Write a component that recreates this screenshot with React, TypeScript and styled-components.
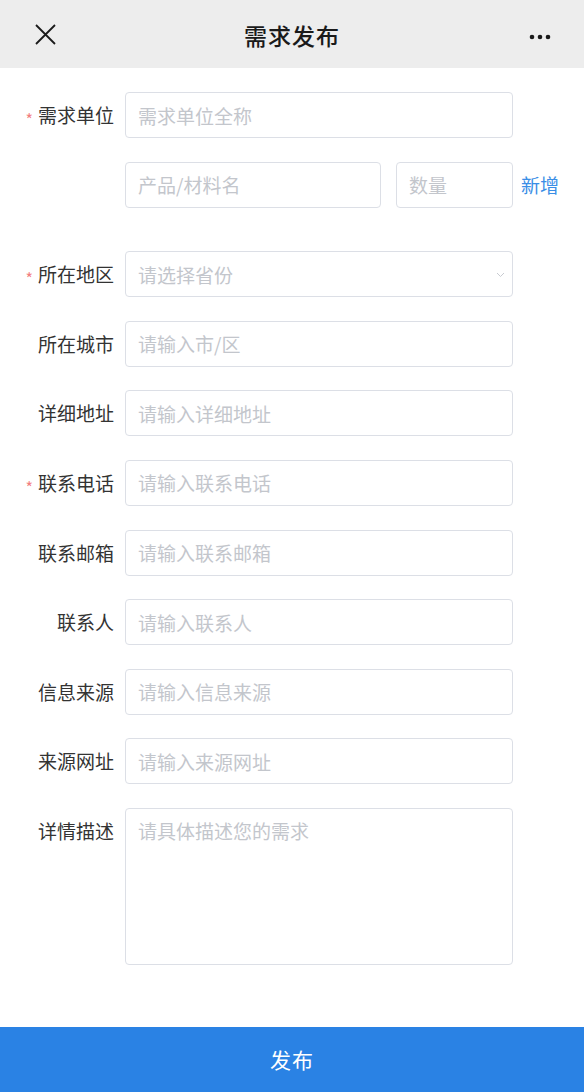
import React from "react";
import styled, { createGlobalStyle } from "styled-components";

const GlobalStyle = createGlobalStyle`
  html, body { margin: 0; padding: 0; background: #ffffff; }
  body { font-family: "Noto Sans CJK SC", "Noto Sans", sans-serif; }
  * { box-sizing: border-box; }
`;

const Page = styled.div`
  width: 584px;
  min-height: 1092px;
  display: flex;
  flex-direction: column;
  background: #fff;
`;

const Header = styled.header`
  position: relative;
  height: 68px;
  background: #ededed;
  display: flex;
  align-items: center;
  justify-content: space-between;
  padding: 0 33px 0 35px;
`;

const Title = styled.h1`
  position: absolute;
  left: 0;
  right: 0;
  top: 0;
  line-height: 70px;
  margin: 0;
  text-align: center;
  font-size: 23px;
  font-weight: 500;
  color: #1a1a1a;
  letter-spacing: 1px;
  pointer-events: none;
`;

const Dots = styled.svg`
  margin-top: 6px;
`;

const Form = styled.form`
  padding-top: 24px;
  display: flex;
  flex-direction: column;
`;

const Row = styled.div<{ $gap?: number; $top?: boolean }>`
  display: flex;
  align-items: ${(p) => (p.$top ? "flex-start" : "center")};
  gap: 11px;
  margin-bottom: ${(p) => (p.$gap ?? 23.6)}px;
`;

const Label = styled.label`
  width: 114px;
  height: 46px;
  flex: 0 0 114px;
  text-align: right;
  font-size: 19px;
  line-height: 46px;
  color: #333;
  white-space: nowrap;
`;

const Star = styled.span`
  display: inline-block;
  color: #f27f7f;
  font-size: 16px;
  line-height: 1;
  margin-right: 5px;
  transform: translateY(3px);
`;

const Input = styled.input<{ $w: number }>`
  width: ${(p) => p.$w}px;
  height: 46px;
  border: 1px solid #dcdfe6;
  border-radius: 4px;
  padding: 0 12px;
  font-size: 19px;
  font-family: inherit;
  color: #333;
  background: #fff;
  outline: none;
  &::placeholder { color: #c3c6cc; }
`;

const SelectBox = styled.div`
  position: relative;
  width: 388px;
  height: 46px;
`;

const Chevron = styled.svg`
  position: absolute;
  right: 8px;
  top: 21px;
`;

const Spacer = styled.div`
  width: 114px;
  flex: 0 0 114px;
`;

const SubGroup = styled.div`
  display: flex;
  align-items: center;
  gap: 15px;
`;

const AddLink = styled.a`
  color: #3a8ee6;
  font-size: 19px;
  margin-left: -7px;
  cursor: pointer;
`;

const TextArea = styled.textarea`
  display: block;
  width: 388px;
  height: 157px;
  border: 1px solid #dcdfe6;
  border-radius: 4px;
  padding: 8px 12px;
  font-size: 19px;
  font-family: inherit;
  resize: none;
  outline: none;
  &::placeholder { color: #c3c6cc; }
`;

const Submit = styled.button`
  margin-top: 62px;
  width: 584px;
  height: 65px;
  border: none;
  background: #2a82e4;
  color: #fff;
  font-size: 21px;
  font-family: inherit;
  letter-spacing: 1px;
`;

type Field = { label: string; ph: string; req?: boolean };

const fields: Field[] = [
  { label: "所在城市", ph: "请输入市/区" },
  { label: "详细地址", ph: "请输入详细地址" },
  { label: "联系电话", ph: "请输入联系电话", req: true },
  { label: "联系邮箱", ph: "请输入联系邮箱" },
  { label: "联系人", ph: "请输入联系人" },
  { label: "信息来源", ph: "请输入信息来源" },
  { label: "来源网址", ph: "请输入来源网址" },
];

export default function App() {
  return (
    <Page>
      <GlobalStyle />
      <Header>
        <svg width="21" height="21" viewBox="0 0 21 21">
          <path d="M1 1 L20 20 M20 1 L1 20" stroke="#1a1a1a" strokeWidth="1.8" fill="none" />
        </svg>
        <Title>需求发布</Title>
        <Dots width="22" height="6" viewBox="0 0 22 6">
          <circle cx="3" cy="3" r="2.3" fill="#1a1a1a" />
          <circle cx="11" cy="3" r="2.3" fill="#1a1a1a" />
          <circle cx="19" cy="3" r="2.3" fill="#1a1a1a" />
        </Dots>
      </Header>
      <Form onSubmit={(e) => e.preventDefault()}>
        <Row>
          <Label><Star>*</Star>需求单位</Label>
          <Input $w={388} placeholder="需求单位全称" />
        </Row>
        <Row $gap={43.6}>
          <Spacer />
          <SubGroup>
            <Input $w={256} placeholder="产品/材料名" />
            <Input $w={117} placeholder="数量" />
            <AddLink>新增</AddLink>
          </SubGroup>
        </Row>
        <Row>
          <Label><Star>*</Star>所在地区</Label>
          <SelectBox>
            <Input $w={388} placeholder="请选择省份" readOnly />
            <Chevron width="9" height="6" viewBox="0 0 9 6">
              <path d="M1 1 L4.5 4.5 L8 1" stroke="#c8cbd1" strokeWidth="1" fill="none" />
            </Chevron>
          </SelectBox>
        </Row>
        {fields.map((f) => (
          <Row key={f.label}>
            <Label>{f.req && <Star>*</Star>}{f.label}</Label>
            <Input $w={388} placeholder={f.ph} />
          </Row>
        ))}
        <Row $top $gap={0}>
          <Label>详情描述</Label>
          <TextArea placeholder="请具体描述您的需求" />
        </Row>
        <Submit type="submit">发布</Submit>
      </Form>
    </Page>
  );
}
